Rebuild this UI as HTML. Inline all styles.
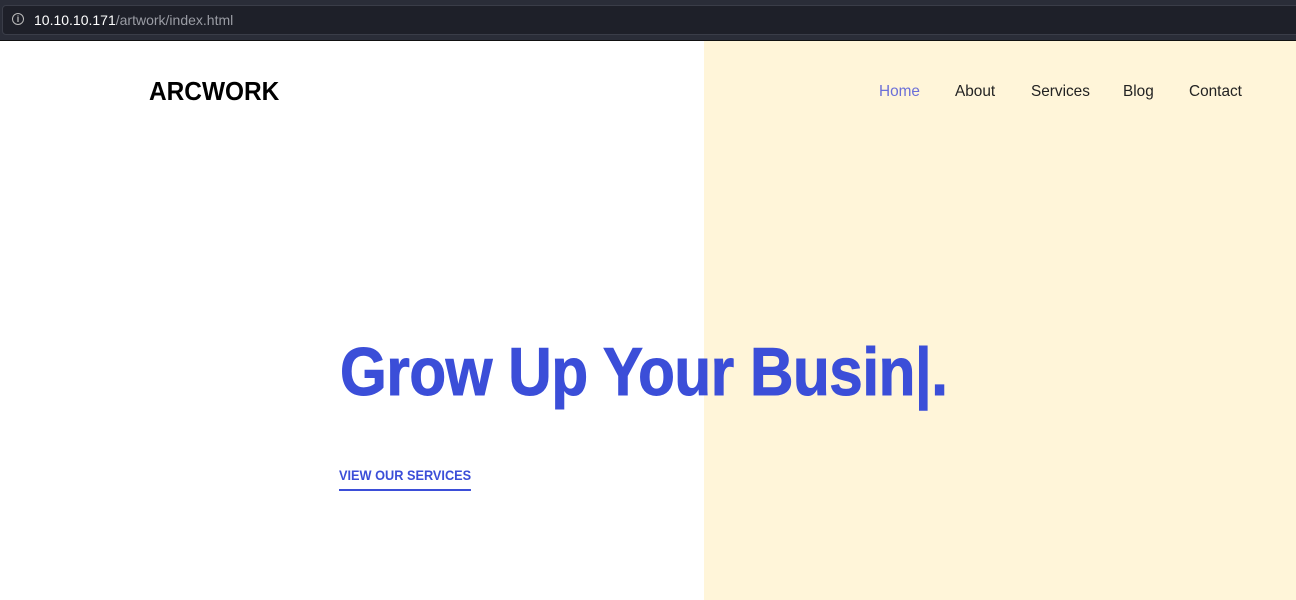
<!DOCTYPE html>
<html><head><style>
body{margin:0;width:1296px;height:600px;overflow:hidden;background:#fff;font-family:"Liberation Sans",sans-serif;position:relative}
.bar{position:absolute;left:0;top:0;width:1296px;height:40px;background:#2a2d38;border-bottom:1px solid #111}
.url{position:absolute;left:2px;top:5px;width:1300px;height:28px;background:#1e2029;border:1px solid #3a3d48;border-radius:4px}
.url .i{position:absolute;left:9px;top:7px;width:10px;height:10px;border:1.5px solid #bbb;border-radius:50%;font-size:9px;color:#bbb;text-align:center;line-height:10px;font-weight:bold}
.url .t{position:absolute;left:31px;top:6px;font-size:14px;color:#fff}
.url .t span{color:#9a9ca4}
.yel{position:absolute;left:704px;top:41px;width:592px;height:559px;background:#fff5d9}
.logo{position:absolute;left:149px;top:76px;font-size:26px;font-weight:bold;color:#000;transform:scaleX(.94);transform-origin:left}
.nav{position:absolute;top:83px;font-size:16px;color:#222;transform:scaleX(.96);transform-origin:left}
h1{position:absolute;left:340px;top:333px;margin:0;font-size:68px;font-weight:bold;color:#3b4ed8;white-space:nowrap;transform:scaleX(.885);transform-origin:left;letter-spacing:-0.5px;-webkit-text-stroke:1px #3b4ed8}
.btn{position:absolute;left:339px;top:467px;font-size:14px;font-weight:bold;color:#3b4ed8;border-bottom:2px solid #3b4ed8;padding-bottom:6px;transform:scaleX(.91);transform-origin:left;white-space:nowrap}
</style></head><body>
<div class="bar"><div class="url"><div class="i">i</div><div class="t">10.10.10.171<span>/artwork/index.html</span></div></div></div>
<div class="yel"></div>
<div class="logo">ARCWORK</div>
<div class="nav" style="left:879px;color:#6b6fd8">Home</div>
<div class="nav" style="left:955px">About</div>
<div class="nav" style="left:1031px">Services</div>
<div class="nav" style="left:1123px">Blog</div>
<div class="nav" style="left:1189px">Contact</div>
<h1>Grow Up Your Busin|.</h1>
<div class="btn">VIEW OUR SERVICES</div>
</body></html>
